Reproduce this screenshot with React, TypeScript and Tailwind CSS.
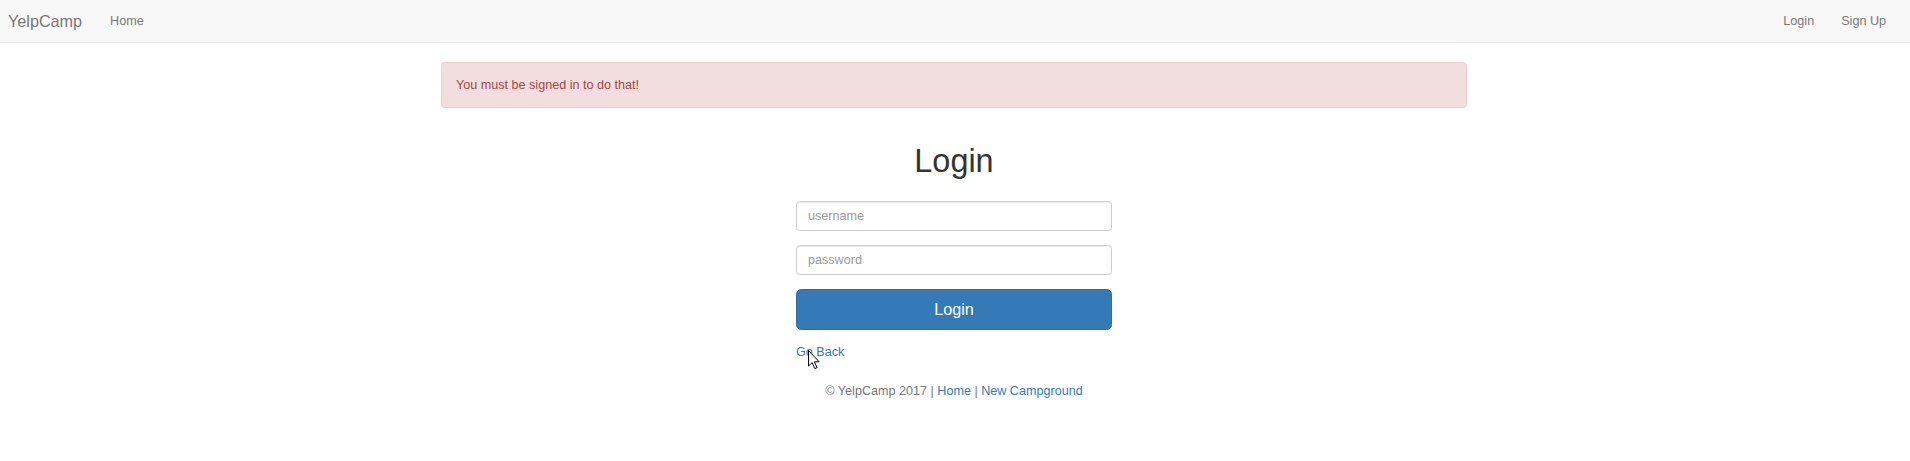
import { type FC } from "react";

const font = { fontFamily: '"Liberation Sans", Arial, sans-serif' };

const Navbar: FC = () => {
  return (
    <nav className="flex h-[43px] items-center border-b border-[#e7e7e7] bg-[#f8f8f8] text-[12.6px] text-[#777]">
      <a className="ml-[8px] text-[16.2px] leading-none">YelpCamp</a>
      <a className="ml-[28px]">Home</a>
      <div className="ml-auto mr-[24px] flex gap-[27px]">
        <a>Login</a>
        <a>Sign Up</a>
      </div>
    </nav>
  );
};

const Cursor: FC = () => {
  return (
    <svg
      className="pointer-events-none absolute left-[12px] top-[7px]"
      width="13"
      height="20"
      viewBox="0 0 13 20"
    >
      <path
        d="M0.5 0.5 L0.5 16 L4.2 12.6 L6.8 18.6 L9 17.6 L6.4 11.8 L11.2 11.8 Z"
        fill="#fff"
        stroke="#000"
        strokeWidth="1"
        strokeLinejoin="round"
      />
    </svg>
  );
};

const LoginForm: FC = () => {
  return (
    <div className="mx-auto mt-[21px] w-[316px]">
      <form className="flex flex-col gap-[14px]">
        <input
          type="text"
          placeholder="username"
          className="h-[30px] w-full rounded-[3.6px] border border-[#ccc] px-[11px] text-[12.6px] text-[#555] shadow-[inset_0_1px_1px_rgba(0,0,0,0.075)] outline-none placeholder:text-[#999]"
        />
        <input
          type="password"
          placeholder="password"
          className="h-[30px] w-full rounded-[3.6px] border border-[#ccc] px-[11px] text-[12.6px] text-[#555] shadow-[inset_0_1px_1px_rgba(0,0,0,0.075)] outline-none placeholder:text-[#999]"
        />
        <button
          type="button"
          className="h-[41px] w-full rounded-[5.4px] border border-[#2e6da4] bg-[#337ab7] text-[16.2px] text-white"
        >
          Login
        </button>
      </form>
      <div className="relative mt-[13px] h-[18px] text-[12.6px] leading-[18px]">
        <a className="text-[#337ab7]">Go Back</a>
        <Cursor />
      </div>
    </div>
  );
};

export default function App() {
  return (
    <div className="min-h-[461px] bg-white text-[12.6px] leading-[18px] text-[#333]" style={font}>
      <Navbar />
      <div className="flex justify-center pr-[2px]">
        <div className="w-[1026px]">
          <div className="mt-[19px] flex h-[46px] items-center rounded-[3.6px] border border-[#ebccd1] bg-[#f2dede] px-[14px] text-[#a94442]">
            You must be signed in to do that!
          </div>
          <h1 className="mt-[36px] text-center text-[32.4px] leading-[1.1] font-normal text-[#333]">
            Login
          </h1>
          <LoginForm />
          <p className="mt-[21px] text-center text-[#777]">
            © YelpCamp 2017 | <a className="text-[#337ab7]">Home</a> |{" "}
            <a className="text-[#337ab7]">New Campground</a>
          </p>
        </div>
      </div>
    </div>
  );
}
